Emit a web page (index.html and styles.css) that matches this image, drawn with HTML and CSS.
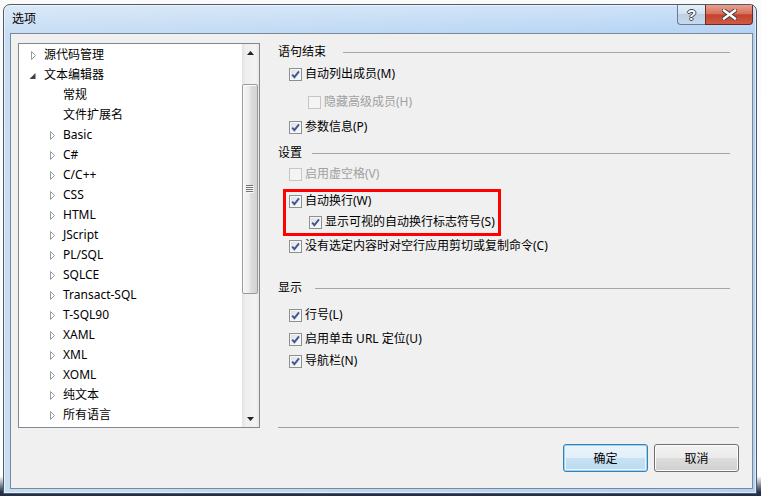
FILE: index.html
```html
<!DOCTYPE html>
<html lang="zh-CN">
<head>
<meta charset="utf-8">
<title>选项</title>
<link rel="stylesheet" href="styles.css">
</head>
<body>
<div class="window">
  <div class="titlebar">
    <span class="title">选项</span>
    <div class="caption-buttons">
      <div class="cap-btn help"><span class="help-glyph">?</span></div>
      <div class="cap-btn close">
        <svg width="15" height="11" viewBox="0 0 15 11"><path d="M2 1.5L13 9.5M13 1.5L2 9.5" stroke="#3b3f47" stroke-width="4.2" stroke-linecap="square"/><path d="M2 1.5L13 9.5M13 1.5L2 9.5" stroke="#fff" stroke-width="2.4" stroke-linecap="square"/></svg>
      </div>
    </div>
  </div>
  <div class="client">
    <div class="main">
      <div class="tree">
        <ul class="tree-list">
          <li class="node"><span class="exp"><svg width="7" height="9" viewBox="0 0 7 9"><path d="M2.5 0.5L6.5 4.5L2.5 8.5Z" fill="#fff" stroke="#9a9a9a"/></svg></span>源代码管理</li>
          <li class="node"><span class="exp"><svg width="7" height="9" viewBox="0 0 7 9"><path d="M0.5 8L6.5 2V8Z" fill="#404040"/></svg></span>文本编辑器</li>
          <li class="node child"><span class="exp"></span>常规</li>
          <li class="node child"><span class="exp"></span>文件扩展名</li>
          <li class="node child"><span class="exp"><svg width="7" height="9" viewBox="0 0 7 9"><path d="M2.5 0.5L6.5 4.5L2.5 8.5Z" fill="#fff" stroke="#9a9a9a"/></svg></span>Basic</li>
          <li class="node child"><span class="exp"><svg width="7" height="9" viewBox="0 0 7 9"><path d="M2.5 0.5L6.5 4.5L2.5 8.5Z" fill="#fff" stroke="#9a9a9a"/></svg></span>C#</li>
          <li class="node child"><span class="exp"><svg width="7" height="9" viewBox="0 0 7 9"><path d="M2.5 0.5L6.5 4.5L2.5 8.5Z" fill="#fff" stroke="#9a9a9a"/></svg></span>C/C++</li>
          <li class="node child"><span class="exp"><svg width="7" height="9" viewBox="0 0 7 9"><path d="M2.5 0.5L6.5 4.5L2.5 8.5Z" fill="#fff" stroke="#9a9a9a"/></svg></span>CSS</li>
          <li class="node child"><span class="exp"><svg width="7" height="9" viewBox="0 0 7 9"><path d="M2.5 0.5L6.5 4.5L2.5 8.5Z" fill="#fff" stroke="#9a9a9a"/></svg></span>HTML</li>
          <li class="node child"><span class="exp"><svg width="7" height="9" viewBox="0 0 7 9"><path d="M2.5 0.5L6.5 4.5L2.5 8.5Z" fill="#fff" stroke="#9a9a9a"/></svg></span>JScript</li>
          <li class="node child"><span class="exp"><svg width="7" height="9" viewBox="0 0 7 9"><path d="M2.5 0.5L6.5 4.5L2.5 8.5Z" fill="#fff" stroke="#9a9a9a"/></svg></span>PL/SQL</li>
          <li class="node child"><span class="exp"><svg width="7" height="9" viewBox="0 0 7 9"><path d="M2.5 0.5L6.5 4.5L2.5 8.5Z" fill="#fff" stroke="#9a9a9a"/></svg></span>SQLCE</li>
          <li class="node child"><span class="exp"><svg width="7" height="9" viewBox="0 0 7 9"><path d="M2.5 0.5L6.5 4.5L2.5 8.5Z" fill="#fff" stroke="#9a9a9a"/></svg></span>Transact-SQL</li>
          <li class="node child"><span class="exp"><svg width="7" height="9" viewBox="0 0 7 9"><path d="M2.5 0.5L6.5 4.5L2.5 8.5Z" fill="#fff" stroke="#9a9a9a"/></svg></span>T-SQL90</li>
          <li class="node child"><span class="exp"><svg width="7" height="9" viewBox="0 0 7 9"><path d="M2.5 0.5L6.5 4.5L2.5 8.5Z" fill="#fff" stroke="#9a9a9a"/></svg></span>XAML</li>
          <li class="node child"><span class="exp"><svg width="7" height="9" viewBox="0 0 7 9"><path d="M2.5 0.5L6.5 4.5L2.5 8.5Z" fill="#fff" stroke="#9a9a9a"/></svg></span>XML</li>
          <li class="node child"><span class="exp"><svg width="7" height="9" viewBox="0 0 7 9"><path d="M2.5 0.5L6.5 4.5L2.5 8.5Z" fill="#fff" stroke="#9a9a9a"/></svg></span>XOML</li>
          <li class="node child"><span class="exp"><svg width="7" height="9" viewBox="0 0 7 9"><path d="M2.5 0.5L6.5 4.5L2.5 8.5Z" fill="#fff" stroke="#9a9a9a"/></svg></span>纯文本</li>
          <li class="node child"><span class="exp"><svg width="7" height="9" viewBox="0 0 7 9"><path d="M2.5 0.5L6.5 4.5L2.5 8.5Z" fill="#fff" stroke="#9a9a9a"/></svg></span>所有语言</li>
        </ul>
        <div class="scrollbar">
          <div class="sb-btn"><svg width="7" height="4" viewBox="0 0 7 4"><path d="M0 4L3.5 0L7 4Z" fill="#222"/></svg></div>
          <div class="sb-track">
            <div class="sb-thumb">
              <svg width="8" height="8" viewBox="0 0 8 8"><path d="M0 0.5H7M0 2.5H7M0 4.5H7M0 6.5H7" stroke="#707070"/><path d="M1 1.5H8M1 3.5H8M1 5.5H8M1 7.5H8" stroke="#fbfbfb"/></svg>
            </div>
          </div>
          <div class="sb-btn"><svg width="7" height="4" viewBox="0 0 7 4"><path d="M0 0L3.5 4L7 0Z" fill="#222"/></svg></div>
        </div>
      </div>
      <div class="options">
        <div class="group-head gh-1">语句结束</div>
        <div class="cb-row mt-6"><span class="cb on"><svg width="11" height="11" viewBox="0 0 11 11"><path d="M2.2 5.6L4.4 8.2L9 2.4" fill="none" stroke="#3f5595" stroke-width="1.9"/></svg></span><span>自动列出成员(M)</span></div>
        <div class="cb-row sub disabled mt-12"><span class="cb"></span><span>隐藏高级成员(H)</span></div>
        <div class="cb-row mt-9"><span class="cb on"><svg width="11" height="11" viewBox="0 0 11 11"><path d="M2.2 5.6L4.4 8.2L9 2.4" fill="none" stroke="#3f5595" stroke-width="1.9"/></svg></span><span>参数信息(P)</span></div>

        <div class="group-head gh-2 mt-10">设置</div>
        <div class="cb-row disabled mt-5"><span class="cb"></span><span>启用虚空格(V)</span></div>
        <div class="highlight mt-7">
          <div class="cb-row"><span class="cb on"><svg width="11" height="11" viewBox="0 0 11 11"><path d="M2.2 5.6L4.4 8.2L9 2.4" fill="none" stroke="#3f5595" stroke-width="1.9"/></svg></span><span>自动换行(W)</span></div>
          <div class="cb-row sub mt-5"><span class="cb on"><svg width="11" height="11" viewBox="0 0 11 11"><path d="M2.2 5.6L4.4 8.2L9 2.4" fill="none" stroke="#3f5595" stroke-width="1.9"/></svg></span><span>显示可视的自动换行标志符号(S)</span></div>
        </div>
        <div class="cb-row mt-2"><span class="cb on"><svg width="11" height="11" viewBox="0 0 11 11"><path d="M2.2 5.6L4.4 8.2L9 2.4" fill="none" stroke="#3f5595" stroke-width="1.9"/></svg></span><span>没有选定内容时对空行应用剪切或复制命令(C)</span></div>

        <div class="group-head gh-3 mt-26">显示</div>
        <div class="cb-row mt-11"><span class="cb on"><svg width="11" height="11" viewBox="0 0 11 11"><path d="M2.2 5.6L4.4 8.2L9 2.4" fill="none" stroke="#3f5595" stroke-width="1.9"/></svg></span><span>行号(L)</span></div>
        <div class="cb-row mt-8"><span class="cb on"><svg width="11" height="11" viewBox="0 0 11 11"><path d="M2.2 5.6L4.4 8.2L9 2.4" fill="none" stroke="#3f5595" stroke-width="1.9"/></svg></span><span>启用单击 URL 定位(U)</span></div>
        <div class="cb-row mt-6"><span class="cb on"><svg width="11" height="11" viewBox="0 0 11 11"><path d="M2.2 5.6L4.4 8.2L9 2.4" fill="none" stroke="#3f5595" stroke-width="1.9"/></svg></span><span>导航栏(N)</span></div>
      </div>
    </div>
    <div class="actions">
      <button class="btn default">确定</button>
      <button class="btn">取消</button>
    </div>
  </div>
</div>
</body>
</html>
```

FILE: styles.css
```css
* { box-sizing: border-box; }

html, body { margin: 0; }

body {
  width: 761px;
  height: 496px;
  overflow: hidden;
  padding: 4px 0 0 3px;
  background: linear-gradient(#fafafa 0, #ffffff 96%, #24304a 99.2%);
  font-family: "Noto Sans", "Noto Sans CJK SC", sans-serif;
  font-size: 12px;
  color: #000;
}

.window {
  width: 754px;
  height: 490px;
  border: 1px solid #505b69;
  border-radius: 7px 7px 0 0;
  padding: 0 3px 4px 6px;
  display: flex;
  flex-direction: column;
  background:
    linear-gradient(rgba(255,255,255,0.35), rgba(255,255,255,0) 30px),
    linear-gradient(to right, #c7ddf4, #bdd8f4 50%, #b2d2f5);
  box-shadow: inset 0 0 0 1px rgba(255,255,255,0.55);
}

.titlebar {
  height: 28px;
  display: flex;
  align-items: flex-start;
  justify-content: space-between;
  flex: none;
}

.title {
  padding: 6px 0 0 2px;
  line-height: 16px;
  font-size: 12px;
  color: #000;
}

.caption-buttons {
  display: flex;
}

.cap-btn {
  height: 20px;
  display: flex;
  align-items: center;
  justify-content: center;
}

.help {
  width: 28px;
  border: 1px solid #6b7a8c;
  border-top: 0;
  border-right: 0;
  border-radius: 0 0 0 4px;
  background: linear-gradient(#e6eff9, #d2e1f1 45%, #bccfe4 50%, #c8d9ec);
}

.help-glyph {
  font-family: "Liberation Sans", sans-serif;
  font-weight: bold;
  font-size: 15px;
  line-height: 15px;
  color: #fff;
  text-shadow: 1px 0 0 #3b4350, -1px 0 0 #3b4350, 0 1px 0 #3b4350, 0 -1px 0 #3b4350;
}

.close {
  width: 48px;
  border: 1px solid #6e2a22;
  border-top: 0;
  border-radius: 0 0 4px 0;
  background: linear-gradient(#e9a190, #d8705e 45%, #c4422e 52%, #d05b42);
}

.client {
  height: 456px;
  border: 1px solid #7b8898;
  background: #f0f0f0;
  padding: 9px 13px 0 7px;
  flex: none;
}

.main {
  display: flex;
  gap: 18px;
  height: 385px;
}

.tree {
  width: 242px;
  border: 1px solid #828790;
  background: #fff;
  display: flex;
}

.tree-list {
  flex: 1;
  list-style: none;
  margin: 0;
  padding: 1px 0 0 0;
  overflow: hidden;
}

.node {
  height: 20px;
  display: flex;
  align-items: center;
  padding-left: 10px;
  white-space: nowrap;
  line-height: 16px;
  color: #000;
}

.node.child { padding-left: 29px; }

.exp {
  width: 7px;
  height: 9px;
  margin-right: 8px;
  flex: none;
  display: flex;
}

.scrollbar {
  width: 17px;
  flex: none;
  display: flex;
  flex-direction: column;
  background: linear-gradient(to right, #e2e2e2, #eeeeee 20%, #f3f3f3 80%, #e8e8e8);
}

.sb-btn {
  height: 17px;
  flex: none;
  display: flex;
  align-items: center;
  justify-content: center;
}

.sb-track { flex: 1; }

.sb-thumb {
  margin: 23px 1px 0 0;
  height: 210px;
  border: 1px solid #9a9a9a;
  border-radius: 2px;
  background: linear-gradient(to right, #f5f5f5, #ececec 45%, #dedede 55%, #d2d2d2);
  box-shadow: inset 1px 1px 0 #fcfcfc;
  display: flex;
  align-items: center;
  justify-content: center;
}

.options {
  flex: 1;
  display: flex;
  flex-direction: column;
  padding-top: 1px;
  border-bottom: 1px solid #a0a0a0;
}

.group-head {
  height: 16px;
  line-height: 16px;
  display: flex;
  align-items: center;
  margin-right: 9px;
  color: #000;
}

.group-head::after {
  content: "";
  flex: 1;
  height: 1px;
  background: #a5a5a5;
  margin-left: 12px;
}

.gh-1::after { margin-left: 17px; }
.gh-2::after { margin-left: 10px; }
.gh-3::after { margin-left: 13px; }

.cb-row {
  height: 16px;
  line-height: 16px;
  display: flex;
  align-items: center;
  gap: 3px;
  padding-left: 11px;
  white-space: nowrap;
}

.cb-row.sub { padding-left: 30px; }

.cb {
  width: 13px;
  height: 13px;
  flex: none;
  border: 1px solid #8e8f8f;
  background: linear-gradient(135deg, #dcdcdc, #f0f0f0 55%, #fbfbfb);
  box-shadow: inset 0 0 0 1px #f6f6f6;
  display: flex;
  align-items: center;
  justify-content: center;
}

.disabled { color: #a0a0a0; }

.disabled .cb {
  border-color: #c6c6c6;
  background: #f4f4f4;
  box-shadow: none;
}

.highlight {
  width: 218px;
  margin-left: 5px;
  border: 3px solid #ff0000;
  padding: 1px 0 3px 0;
}

.highlight .cb-row { padding-left: 3px; }
.highlight .cb-row.sub { padding-left: 23px; }

.mt-2 { margin-top: 2px; }
.mt-5 { margin-top: 5px; }
.mt-6 { margin-top: 6px; }
.mt-7 { margin-top: 7px; }
.mt-8 { margin-top: 8px; }
.mt-9 { margin-top: 9px; }
.mt-10 { margin-top: 10px; }
.mt-11 { margin-top: 11px; }
.mt-12 { margin-top: 12px; }
.mt-26 { margin-top: 26px; }

.actions {
  display: flex;
  justify-content: flex-end;
  gap: 6px;
  margin-top: 16px;
}

.btn {
  width: 85px;
  height: 28px;
  border: 1px solid #707070;
  border-radius: 3px;
  background: linear-gradient(#f2f2f2, #ebebeb 49%, #dddddd 50%, #cfcfcf);
  box-shadow: inset 0 0 0 1px #fbfbfb;
  font-family: "Noto Sans", "Noto Sans CJK SC", sans-serif;
  font-size: 12px;
  color: #000;
  padding: 0;
  display: flex;
  align-items: center;
  justify-content: center;
}

.btn.default {
  border-color: #3c7fb1;
  background: linear-gradient(#eaf4fb, #e2eff9 49%, #c9e2f2 50%, #b9dbef);
  box-shadow: inset 0 0 0 1px #9bd3f4, inset 0 0 0 2px #e8f5fd;
}
```
